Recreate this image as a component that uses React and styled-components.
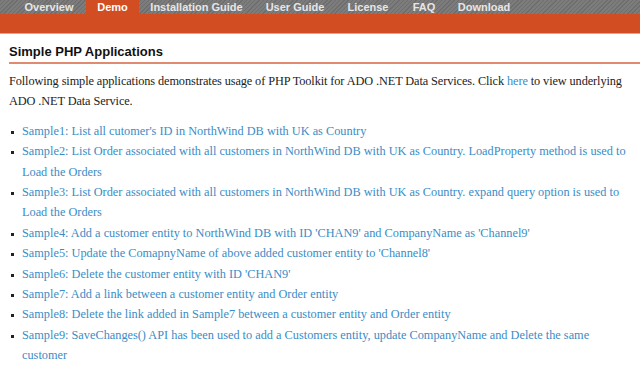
import React from 'react'
import styled, { createGlobalStyle } from 'styled-components'

const GlobalStyle = createGlobalStyle`
    body {
        margin: 0;
        background: #ffffff;
        font-family: 'Liberation Serif', 'DejaVu Serif', serif;
    }
`

const Page = styled.div`
    width: 640px;
    height: 370px;
    overflow: hidden;
    background: #fff;
`

const TopBar = styled.nav`
    display: flex;
    height: 14px;
    padding-left: 12px;
    background: repeating-linear-gradient(
        135deg,
        #6e6e6e 0px,
        #6e6e6e 1px,
        #7c7c7c 1px,
        #7c7c7c 3px
    );
`

const Tab = styled.a`
    display: flex;
    align-items: center;
    justify-content: center;
    width: ${({ $w }) => $w}px;
    height: 14px;
    font-family: 'Liberation Sans', Arial, sans-serif;
    font-weight: 700;
    font-size: 11px;
    color: ${({ $active }) => ($active ? '#ffffff' : '#e6e6e6')};
    background: ${({ $active }) => ($active ? '#d24d22' : 'transparent')};
    text-decoration: none;
    white-space: nowrap;
`

const Band = styled.div`
    height: 19px;
    background: #d24d22;
    border-bottom: 1px solid #e9a184;
`

const Content = styled.main`
    padding: 10px 0 0 9px;
`

const Heading = styled.h2`
    margin: 0;
    padding-bottom: 3px;
    font-family: 'Liberation Sans', Arial, sans-serif;
    font-size: 13px;
    font-weight: 700;
    color: #111;
    border-bottom: 2px solid #e08a70;
`

const Intro = styled.p`
    margin: 7px 0 0;
    font-size: 12.3px;
    letter-spacing: -0.1px;
    line-height: 20.4px;
    color: #222;
`

const Link = styled.a`
    color: #3a8cc6;
    text-decoration: none;
`

const Samples = styled.ul`
    margin: 9px 0 0;
    padding: 0 10px 0 13px;
    list-style: none;
`

const Sample = styled.li`
    position: relative;
    font-size: 12.3px;
    line-height: 20.4px;
    color: #3a8cc6;
    &::before {
        content: '';
        position: absolute;
        left: -11px;
        top: 10px;
        width: 3px;
        height: 3px;
        background: #222;
    }
`

const tabs = [
    ['Overview', false, 74],
    ['Demo', true, 53],
    ['Installation Guide', false, 115],
    ['User Guide', false, 82],
    ['License', false, 64],
    ['FAQ', false, 48],
    ['Download', false, 72],
]

const samples = [
    "Sample1: List all cutomer's ID in NorthWind DB with UK as Country",
    'Sample2: List Order associated with all customers in NorthWind DB with UK as Country. LoadProperty method is used to Load the Orders',
    'Sample3: List Order associated with all customers in NorthWind DB with UK as Country. expand query option is used to Load the Orders',
    "Sample4: Add a customer entity to NorthWind DB with ID 'CHAN9' and CompanyName as 'Channel9'",
    "Sample5: Update the ComapnyName of above added customer entity to 'Channel8'",
    "Sample6: Delete the customer entity with ID 'CHAN9'",
    'Sample7: Add a link between a customer entity and Order entity',
    'Sample8: Delete the link added in Sample7 between a customer entity and Order entity',
    'Sample9: SaveChanges() API has been used to add a Customers entity, update CompanyName and Delete the same customer',
]

const App = () => {
    return (
        <Page>
            <GlobalStyle />
            <TopBar>
                {tabs.map(([label, active, w]) => (
                    <Tab key={label} $active={active} $w={w}>{label}</Tab>
                ))}
            </TopBar>
            <Band />
            <Content>
                <Heading>Simple PHP Applications</Heading>
                <Intro>
                    Following simple applications demonstrates usage of PHP Toolkit for ADO .NET Data Services. Click <Link href="#">here</Link> to view underlying ADO .NET Data Service.
                </Intro>
                <Samples>
                    {samples.map((s) => (
                        <Sample key={s}>{s}</Sample>
                    ))}
                </Samples>
            </Content>
        </Page>
    )
}

export default App
